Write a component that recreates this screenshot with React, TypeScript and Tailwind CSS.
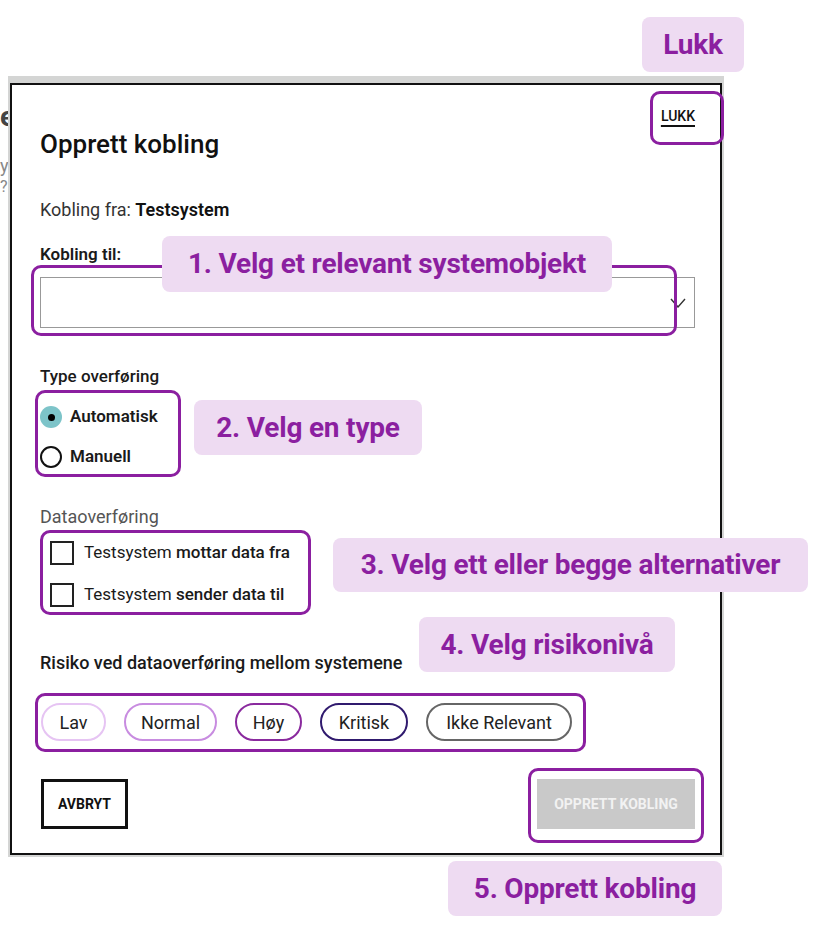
import React from 'react';

const ui = { fontFamily: 'Roboto, "Liberation Sans", sans-serif' };
const note = { fontFamily: 'Roboto, "Liberation Sans", sans-serif' };

function Label({ className, children }: { className: string; children: React.ReactNode }) {
  return (
    <div
      style={note}
      className={`absolute flex items-center justify-center rounded-lg bg-[#eedbf2] text-[28px] font-bold tracking-[-0.2px] text-[#8b1fa0] ${className}`}
    >
      {children}
    </div>
  );
}

function Outline({ className }: { className: string }) {
  return <div className={`absolute rounded-[10px] border-[3px] border-[#8b1fa0] ${className}`} />;
}

const risks = [
  { name: 'Lav', w: 'w-[65px]', border: 'border-[#e6c4f3]' },
  { name: 'Normal', w: 'w-[93px]', border: 'border-[#c88ce0]' },
  { name: 'Høy', w: 'w-[67px]', border: 'border-[#8a2a9e]' },
  { name: 'Kritisk', w: 'w-[88px]', border: 'border-[#301a6e]' },
  { name: 'Ikke Relevant', w: 'w-[146px]', border: 'border-[#666666]' },
];

export default function App() {
  return (
    <div style={ui} className="relative h-[941px] w-[830px] overflow-hidden bg-white text-[#1a1a1a]">
      {/* page behind the dialog */}
      <div className="absolute left-0 top-[100px] w-[12px] overflow-hidden">
        <div className="text-[28px] font-bold leading-[34px] text-[#444]">e</div>
        <div className="mt-[22px] text-[18px] leading-[20px] text-[#888]">y</div>
        <div className="mt-[2px] text-[16px] leading-[18px] text-[#888]">?</div>
      </div>

      <div className="h-[76px]" />

      {/* backdrop + dialog */}
      <div className="relative ml-[8px] w-[716px] bg-[#d4d5d4] pb-[2px] pl-[2px] pr-[2px] pt-[7px]">
        <div className="flex flex-col border-2 border-[#111] bg-white pb-[24px] pl-[28px] pr-[25px]">
          <div className="flex items-start justify-between">
            <h2 className="mt-[43px] h-[32px] text-[26px] font-medium leading-[32px] text-[#111]">Opprett kobling</h2>
            <button className="mt-[21px] h-[20px] text-[14px] font-medium leading-[20px] text-[#111] underline decoration-2 underline-offset-4">
              LUKK
            </button>
          </div>

          <div className="mt-[38px] h-[24px] text-[18px] leading-[24px] text-[#333]">
            Kobling fra: <span className="font-semibold text-[#111]">Testsystem</span>
          </div>

          <div className="mt-[21px] h-[22px] text-[17px] font-semibold leading-[22px]">Kobling til:</div>

          <div className="mt-[12px] flex h-[51px] items-center justify-end border border-[#999] pr-[8px]">
            <svg width="16" height="10" viewBox="0 0 16 10" fill="none" stroke="#333" strokeWidth="1.4">
              <path d="M1 1l7 8 7-8" />
            </svg>
          </div>

          <div className="mt-[37px] h-[22px] text-[17px] font-medium leading-[22px]">Type overføring</div>

          <div className="mt-[15px] flex h-[30px] items-center gap-[8px]">
            <span className="flex h-[22px] w-[22px] items-center justify-center rounded-full bg-[#7dc4c9]">
              <span className="h-[7px] w-[7px] rounded-full bg-black" />
            </span>
            <span className="text-[17px] font-semibold">Automatisk</span>
          </div>
          <div className="mt-[10px] flex h-[30px] items-center gap-[8px]">
            <span className="h-[22px] w-[22px] rounded-full border-2 border-[#111]" />
            <span className="text-[17px] font-semibold">Manuell</span>
          </div>

          <div className="mt-[33px] h-[24px] text-[18px] leading-[24px] text-[#555]">Dataoverføring</div>

          <div className="ml-[10px] mt-[9px] flex h-[30px] items-center gap-[10px]">
            <span className="h-[24px] w-[24px] border-2 border-[#222]" />
            <span className="text-[17px]">
              Testsystem <span className="font-medium">mottar data fra</span>
            </span>
          </div>
          <div className="ml-[10px] mt-[12px] flex h-[30px] items-center gap-[10px]">
            <span className="h-[24px] w-[24px] border-2 border-[#222]" />
            <span className="text-[17px]">
              Testsystem <span className="font-medium">sender data til</span>
            </span>
          </div>

          <div className="mt-[42px] h-[22px] text-[18px] font-medium leading-[22px]">
            Risiko ved dataoverføring mellom systemene
          </div>

          <div className="ml-[1px] mt-[29px] flex gap-[18px]">
            {risks.map((r) => (
              <button
                key={r.name}
                className={`flex h-[38px] items-center justify-center rounded-full border-2 bg-white text-[18px] text-[#222] ${r.w} ${r.border}`}
              >
                {r.name}
              </button>
            ))}
          </div>

          <div className="mt-[38px] flex items-center justify-between">
            <button className="ml-[1px] h-[50px] w-[87px] border-[3px] border-[#111] text-[14px] font-bold text-[#111]">
              AVBRYT
            </button>
            <button className="h-[50px] w-[158px] bg-[#c9c9c9] text-[14px] font-bold text-[#f2f2f2]">
              OPPRETT KOBLING
            </button>
          </div>
        </div>
      </div>

      {/* annotations */}
      <Label className="left-[642px] top-[17px] h-[55px] w-[102px]">Lukk</Label>
      <Outline className="left-[650px] top-[91px] h-[54px] w-[74px]" />

      <Outline className="left-[31px] top-[265px] h-[71px] w-[646px]" />
      <Label className="left-[162px] top-[236px] h-[56px] w-[450px]">1. Velg et relevant systemobjekt</Label>

      <Outline className="left-[35px] top-[390px] h-[87px] w-[146px]" />
      <Label className="left-[194px] top-[400px] h-[55px] w-[228px]">2. Velg en type</Label>

      <Outline className="left-[40px] top-[530px] h-[85px] w-[271px]" />
      <Label className="left-[333px] top-[538px] h-[54px] w-[475px]">3. Velg ett eller begge alternativer</Label>

      <Label className="left-[419px] top-[617px] h-[55px] w-[256px]">4. Velg risikonivå</Label>
      <Outline className="left-[35px] top-[693px] h-[59px] w-[551px]" />

      <Outline className="left-[528px] top-[768px] h-[75px] w-[176px]" />
      <Label className="left-[448px] top-[861px] h-[55px] w-[274px]">5. Opprett kobling</Label>
    </div>
  );
}
